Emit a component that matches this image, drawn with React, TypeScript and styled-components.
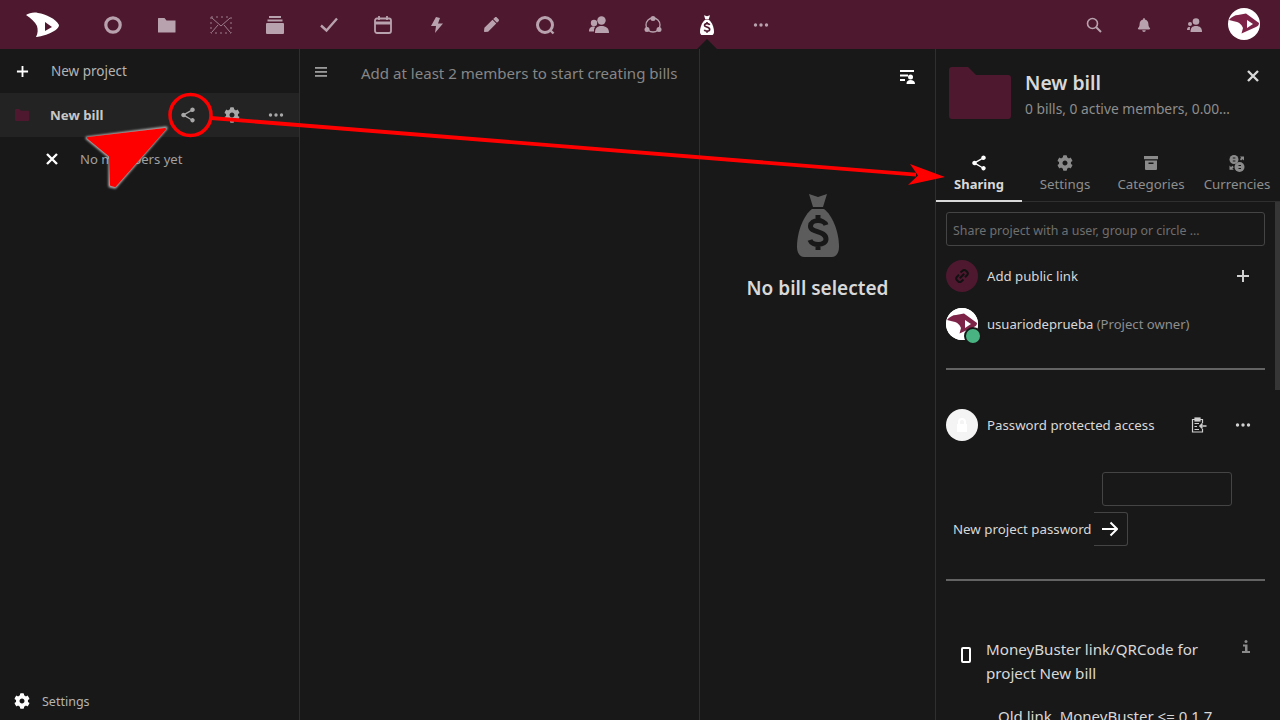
import React from "react";
import styled, { createGlobalStyle } from "styled-components";
import { FaCog, FaBell, FaPen } from "react-icons/fa";
import { MdShare } from "react-icons/md";

const maroon = "#4e182f";
const bg = "#181818";
const iconDim = "#b8a2ad";

const Global = createGlobalStyle`
  html, body { margin: 0; padding: 0; height: 100%; background: ${bg}; overflow: hidden; }
  body { font-family: "Noto Sans", sans-serif; color: #d8d8d8; }
  #root { height: 100%; }
  * { box-sizing: border-box; }
`;

const Page = styled.div`
  position: relative;
  width: 1280px;
  height: 720px;
  overflow: hidden;
  display: flex;
  flex-direction: column;
`;

const TopBar = styled.header`
  height: 49px;
  flex: none;
  display: flex;
  align-items: stretch;
  background: ${maroon};
`;
const LogoBox = styled.div`
  width: 86px;
  display: flex;
  align-items: center;
  justify-content: center;
`;
const AppItem = styled.div<{ $active?: boolean }>`
  position: relative;
  width: 54px;
  display: flex;
  align-items: center;
  justify-content: center;
  color: ${(p) => (p.$active ? "#fff" : iconDim)};
  ${(p) =>
    p.$active &&
    `&::after {
      content: "";
      position: absolute;
      left: 17px;
      bottom: 0;
      border-left: 10px solid transparent;
      border-right: 10px solid transparent;
      border-bottom: 10px solid ${bg};
    }`}
`;
const Spacer = styled.div`
  flex: 1;
`;
const RightItem = styled.div`
  width: 50px;
  display: flex;
  align-items: center;
  justify-content: center;
  color: ${iconDim};
`;
const AvatarSlot = styled.div`
  width: 61px;
  display: flex;
  align-items: center;
  padding: 0 20px 1px 0;
  justify-content: flex-end;
`;

const Main = styled.div`
  flex: 1;
  display: flex;
  min-height: 0;
`;

const Nav = styled.nav`
  width: 300px;
  flex: none;
  border-right: 1px solid #2f2f2f;
  display: flex;
  flex-direction: column;
`;
const NavRow = styled.div<{ $current?: boolean }>`
  height: 44px;
  display: flex;
  align-items: center;
  padding-right: ${(p) => (p.$current ? "1px" : "0")};
  background: ${(p) => (p.$current ? "#232323" : "transparent")};
  font-size: 13.5px;
  color: #b4b4b4;
`;
const NavIconCell = styled.div`
  width: 44px;
  height: 44px;
  flex: none;
  display: flex;
  align-items: center;
  justify-content: center;
  color: #fff;
`;
const NavLabel = styled.span`
  margin-left: 7px;
`;
const NavTitle = styled.span`
  margin-left: 6px;
  flex: 1;
  font-size: 13.25px;
  font-weight: 700;
  color: #c8c8c8;
`;
const NavAction = styled.div`
  width: 44px;
  height: 44px;
  display: flex;
  align-items: center;
  justify-content: center;
  color: #a8a8a8;
`;
const NavSubRow = styled.div`
  height: 44px;
  display: flex;
  align-items: center;
  padding-left: 30px;
  font-size: 13.1px;
  color: #a0a0a0;
`;
const NavSubLabel = styled.span`
  margin-left: 6px;
`;
const NavFooter = styled.div`
  margin-top: auto;
  height: 38px;
  padding-left: 14px;
  display: flex;
  align-items: center;
  font-size: 12.5px;
  color: #b4b4b4;
`;
const FooterLabel = styled.span`
  margin-left: 12px;
`;

const ListCol = styled.section`
  width: 400px;
  flex: none;
  border-right: 1px solid #2f2f2f;
  display: flex;
  align-items: flex-start;
  padding: 14px 0 0 15px;
`;
const ListHint = styled.div`
  margin-left: 33px;
  font-size: 15.05px;
  line-height: 20px;
  color: #868686;
`;

const DetailCol = styled.section`
  width: 235px;
  flex: none;
  display: flex;
  flex-direction: column;
  align-items: center;
`;
const DetailTool = styled.div`
  align-self: flex-end;
  margin: 21px 19px 0 0;
  height: 16px;
  display: flex;
`;
const EmptyBag = styled.div`
  margin-top: 107px;
  display: flex;
`;
const EmptyTitle = styled.h2`
  margin: 16px 0 0;
  font-size: 19px;
  line-height: 30px;
  font-weight: 600;
  color: #d8d8d8;
  white-space: nowrap;
`;

const Aside = styled.aside`
  width: 345px;
  flex: none;
  border-left: 1px solid #2f2f2f;
  display: flex;
  flex-direction: column;
  overflow: hidden;
`;
const AsideHead = styled.div`
  height: 103px;
  flex: none;
  display: flex;
  align-items: flex-start;
  padding: 18px 0 0 13px;
`;
const HeadText = styled.div`
  margin-left: 14px;
  width: 208px;
`;
const HeadTitle = styled.div`
  font-size: 19.4px;
  font-weight: 600;
  line-height: 28px;
  margin-top: 2px;
  color: #d8d8d8;
`;
const HeadSub = styled.div`
  margin-top: 1px;
  font-size: 13.8px;
  line-height: 22px;
  color: #8e8e8e;
  white-space: nowrap;
  overflow: hidden;
  text-overflow: ellipsis;
`;
const CloseBtn = styled.div`
  margin: 2px 0 0 13px;
  color: #d8d8d8;
  display: flex;
`;

const Tabs = styled.div`
  height: 50px;
  flex: none;
  display: flex;
  border-bottom: 1px solid #2f2f2f;
`;
const Tab = styled.div<{ $active?: boolean }>`
  width: 86px;
  height: 50px;
  padding-top: 3px;
  display: flex;
  flex-direction: column;
  align-items: center;
  font-size: ${(p) => (p.$active ? "13px" : "13.3px")};
  line-height: 20px;
  white-space: nowrap;
  font-weight: ${(p) => (p.$active ? 700 : 400)};
  color: ${(p) => (p.$active ? "#d8d8d8" : "#8e8e8e")};
  border-bottom: 2px solid ${(p) => (p.$active ? "#d8d8d8" : "transparent")};
`;
const TabIcon = styled.div<{ $active?: boolean }>`
  height: 16px;
  margin-bottom: 3px;
  display: flex;
  align-items: center;
  justify-content: center;
  color: ${(p) => (p.$active ? "#fff" : "#8a8a8a")};
`;

const PanelWrap = styled.div`
  flex: 1;
  display: flex;
  min-height: 0;
`;
const Panel = styled.div`
  width: 339px;
  flex: none;
  padding: 10px 10px 0;
  font-size: 14px;
  color: #d8d8d8;
`;
const Thumb = styled.div`
  width: 5px;
  height: 188px;
  background: #363636;
`;
const ShareInput = styled.div`
  height: 34px;
  border: 1px solid #444;
  border-radius: 3px;
  padding: 2px 0 0 6px;
  display: flex;
  align-items: center;
  font-size: 12.4px;
  color: #6f6f6f;
  white-space: nowrap;
  margin-bottom: 6px;
`;
const ShareRow = styled.div`
  height: 48px;
  display: flex;
  align-items: center;
`;
const Circle = styled.div<{ $tone: string }>`
  position: relative;
  width: 32px;
  height: 32px;
  flex: none;
  border-radius: 50%;
  background: ${(p) => p.$tone};
  display: flex;
  align-items: center;
  justify-content: center;
`;
const Online = styled.span`
  position: absolute;
  right: -4px;
  bottom: -5px;
  width: 18px;
  height: 18px;
  border-radius: 50%;
  background: #49b382;
  border: 2px solid ${bg};
`;
const RowText = styled.div<{ $size?: number }>`
  margin-left: 9px;
  flex: 1;
  white-space: nowrap;
  font-size: ${(p) => p.$size ?? 13.2}px;
`;
const Muted = styled.span`
  color: #8e8e8e;
`;
const RowBtn = styled.div`
  width: 44px;
  height: 44px;
  display: flex;
  align-items: center;
  justify-content: center;
  color: #d0d0d0;
`;
const Rule = styled.hr<{ $top: number }>`
  border: 0;
  height: 2px;
  background: #636363;
  margin: ${(p) => p.$top}px 0 0;
`;
const PwdRow = styled(ShareRow)`
  margin-top: 31px;
`;
const PwdBox = styled.div`
  margin: 23px 0 0 156px;
  width: 130px;
  height: 34px;
  border: 1px solid #444;
  border-radius: 3px;
`;
const PwdForm = styled.div`
  margin-top: 6px;
  padding-left: 7px;
  height: 34px;
  display: flex;
  align-items: center;
`;
const PwdLabel = styled.span`
  font-size: 13.3px;
  white-space: nowrap;
`;
const SubmitBtn = styled.div`
  margin-left: 2px;
  width: 34px;
  height: 34px;
  border: 1px solid #444;
  border-left: 0;
  border-radius: 0 3px 3px 0;
  display: flex;
  align-items: center;
  justify-content: center;
  color: #fff;
`;
const MoneyRow = styled.div`
  margin-top: 56px;
  display: flex;
  align-items: flex-start;
`;
const MoneyIcon = styled.div`
  width: 40px;
  padding: 10px 0 0 15px;
  flex: none;
  display: flex;
`;
const MoneyText = styled.div`
  width: 244px;
  font-size: 15.15px;
  line-height: 24px;
`;
const MoneyInfo = styled.div`
  margin: 3px 0 0 12px;
  display: flex;
`;
const OldLink = styled.div`
  margin: 19px 0 0 52px;
  font-size: 15px;
  line-height: 24px;
  white-space: nowrap;
`;

const Overlay = styled.svg`
  position: absolute;
  left: 0;
  top: 0;
  width: 1280px;
  height: 720px;
  pointer-events: none;
`;

const Dots = ({ c = "currentColor" }: { c?: string }) => (
  <svg width="16" height="16" viewBox="0 0 16 16" fill={c}>
    <circle cx="2.5" cy="8" r="1.7" />
    <circle cx="8" cy="8" r="1.7" />
    <circle cx="13.5" cy="8" r="1.7" />
  </svg>
);
const Plus = ({ s = 14, w = 2 }: { s?: number; w?: number }) => (
  <svg width={s} height={s} viewBox="0 0 14 14" stroke="currentColor" strokeWidth={w} fill="none">
    <path d="M7 1V13M1 7H13" />
  </svg>
);
const Cross = ({ s = 14, w = 2.4 }: { s?: number; w?: number }) => (
  <svg width={s} height={s} viewBox="0 0 14 14" stroke="currentColor" strokeWidth={w} fill="none">
    <path d="M2 2L12 12M12 2L2 12" />
  </svg>
);
const Folder = ({ w, h }: { w: number; h: number }) => (
  <svg width={w} height={h} viewBox="0 0 62 52" fill={maroon} preserveAspectRatio="none">
    <path d="M3 0H19L27 8H59a3 3 0 0 1 3 3V49a3 3 0 0 1-3 3H3a3 3 0 0 1-3-3V3a3 3 0 0 1 3-3Z" />
  </svg>
);
const Bag = ({ w, h, body, mark }: { w: number; h: number; body: string; mark: string }) => (
  <svg width={w} height={h} viewBox="0 0 42 64" preserveAspectRatio="none">
    <path fill={body} d="M12 1L21 4L30 1L26 14H16Z" />
    <path fill={body} d="M15 16H27C35 22 42 38 42 54C42 60 39 64 35 64H7C3 64 0 60 0 54C0 38 7 22 15 16Z" />
    <path
      fill="none"
      stroke={mark}
      strokeWidth="5"
      d="M29 32C27 26 14 26 13.500 33C13 40 29 37 29 46C29 53 15 53 13 47M21 22V27M21 52V57"
    />
  </svg>
);
const DLogo = () => (
  <svg width="34" height="26" viewBox="0 0 34 26">
    <path
      fillRule="evenodd"
      fill="#fff"
      d="M0 3C3 1 8 0 12 1C20 2 30 7 33 13C33 17 27 20 22 22C17 24 12 25 10 25C12 21 12 18 11 14C9 10 5 6 0 3ZM19 10V19L26 15Z"
    />
  </svg>
);
const UserAvatar = ({ s }: { s: number }) => (
  <svg width={s} height={s} viewBox="0 0 32 32">
    <circle cx="16" cy="16" r="16" fill="#fff" />
    <path
      fillRule="evenodd"
      fill="#7c2347"
      d="M1 12C3 9 7 7 10 7L18 5.500L31 15C31 17 30 18 28 19L13.500 25.500L15 20C14 17 11 14 8 13.700L1 12ZM19 12L19 20L25 16Z"
    />
  </svg>
);

const apps: React.ReactNode[] = [
  <svg key="a" width="18" height="18" viewBox="0 0 18 18" fill="none" stroke="currentColor" strokeWidth="3.200">
    <circle cx="9" cy="9" r="7.200" />
  </svg>,
  <svg key="b" width="18" height="16" viewBox="0 0 18 16" fill="currentColor">
    <path d="M.5 1h6l2 2.500h9v11.500a.5.5 0 0 1-.5.500H.5a.5.5 0 0 1-.5-.5V1.500a.5.5 0 0 1 .5-.5Z" />
  </svg>,
  <svg key="c" width="22" height="18" viewBox="0 0 22 18" fill="none" stroke="currentColor" strokeWidth="1" opacity="0.75">
    <rect x="1" y="1" width="20" height="16" strokeDasharray="2 3" />
    <path d="M2 2L11 10L20 2M2 16L8 9M20 16L14 9" />
  </svg>,
  <svg key="d" width="18" height="18" viewBox="0 0 18 18" fill="currentColor">
    <rect x="3" y="0" width="12" height="2" />
    <rect x="1.500" y="3.500" width="15" height="2" />
    <path d="M1 7H17a1 1 0 0 1 1 1V17a1 1 0 0 1-1 1H1a1 1 0 0 1-1-1V8a1 1 0 0 1 1-1Z" />
  </svg>,
  <svg key="e" width="18" height="16" viewBox="0 0 18 16" fill="none" stroke="currentColor" strokeWidth="2.400">
    <path d="M1 8.500L6.500 13.500L17 1.500" />
  </svg>,
  <svg key="f" width="18" height="18" viewBox="0 0 18 18" fill="none" stroke="currentColor" strokeWidth="1.800">
    <rect x="1" y="2.500" width="16" height="14.500" rx="2" />
    <path d="M1 7H17" strokeWidth="3" />
    <path d="M5 0V4M13 0V4" />
  </svg>,
  <svg key="g" width="12" height="16" viewBox="0 0 12 16" fill="currentColor">
    <path d="M5 0L0 9H5L4 16L12 6.500H7L9 1Z" />
  </svg>,
  <FaPen key="h" size={15} />,
  <svg key="i" width="20" height="20" viewBox="0 0 20 20" fill="none" stroke="currentColor" strokeWidth="3">
    <circle cx="10" cy="10" r="7.500" />
    <path d="M15 15L18.500 18.500" strokeWidth="2.400" />
  </svg>,
  <svg key="j" width="20" height="18" viewBox="0 0 20 18" fill="currentColor">
    <circle cx="12.500" cy="4.500" r="4.200" />
    <path d="M6 17C6 12 8 10 12.500 10C17 10 20 12 20 17Z" />
    <circle cx="5" cy="7" r="3.200" />
    <path d="M0 15.500C0 12 1.500 10.500 5 10.500C6 10.500 6.500 11 5 13V15.500Z" />
  </svg>,
  <svg key="k" width="18" height="18" viewBox="0 0 18 18" fill="none" stroke="currentColor" strokeWidth="1.300">
    <circle cx="9" cy="9" r="7" />
    <g fill="currentColor" stroke="none">
      <circle cx="9" cy="2.500" r="2.500" />
      <circle cx="3" cy="13.500" r="2.500" />
      <circle cx="15" cy="13.500" r="2.500" />
    </g>
  </svg>,
];

const CurrencyIcon = () => (
  <svg width="16" height="17" viewBox="0 0 16 17" fill="currentColor">
    <circle cx="5" cy="4.500" r="4.500" />
    <circle cx="10.500" cy="12" r="5" />
    <path d="M11 1.500H15V5.500L13.600 4.200L12 5.500L10.800 4L12.200 2.900ZM0.500 10.500L2 12L3.500 10.800L4.800 12.300L3.400 13.400L4.800 14.700H0.500Z" />
    <path d="M3.800 3h2.600M3.800 6h2.600M9.500 10.500h2.500M9.500 13.500h2.500" stroke={bg} strokeWidth="1" />
  </svg>
);
const ArchiveIcon = () => (
  <svg width="14" height="14" viewBox="0 0 14 14" fill="currentColor">
    <rect x="0" y="0" width="14" height="3.200" />
    <path d="M1 4.500H13V13a1 1 0 0 1-1 1H2a1 1 0 0 1-1-1ZM4.500 6.500V8H9.500V6.500Z" fillRule="evenodd" />
  </svg>
);

export default function App() {
  return (
    <Page>
      <Global />
      <TopBar>
        <LogoBox>
          <DLogo />
        </LogoBox>
        {apps.map((icon, i) => (
          <AppItem key={i}>{icon}</AppItem>
        ))}
        <AppItem $active>
          <Bag w={14} h={20} body="#fff" mark={maroon} />
        </AppItem>
        <AppItem>
          <Dots />
        </AppItem>
        <Spacer />
        <RightItem>
          <svg width="16" height="16" viewBox="0 0 16 16" fill="none" stroke="currentColor" strokeWidth="1.600">
            <circle cx="6.500" cy="6.500" r="5" />
            <path d="M10 10L15 15" strokeWidth="2" />
          </svg>
        </RightItem>
        <RightItem>
          <FaBell size={14} />
        </RightItem>
        <RightItem>
          <svg width="15" height="14" viewBox="0 0 15 14" fill="currentColor">
            <circle cx="9" cy="3.500" r="3.300" />
            <path d="M3.500 14C3.500 10 5 8 9 8C13 8 15 10 15 14Z" />
            <circle cx="3" cy="6" r="2" />
            <path d="M0 12C0 9.500 1 9 3 9L2.800 12Z" />
          </svg>
        </RightItem>
        <AvatarSlot>
          <UserAvatar s={32} />
        </AvatarSlot>
      </TopBar>
      <Main>
        <Nav>
          <NavRow>
            <NavIconCell>
              <Plus s={13} />
            </NavIconCell>
            <NavLabel>New project</NavLabel>
          </NavRow>
          <NavRow $current>
            <NavIconCell>
              <Folder w={14} h={12} />
            </NavIconCell>
            <NavTitle>New bill</NavTitle>
            <NavAction>
              <MdShare size={18} />
            </NavAction>
            <NavAction>
              <FaCog size={16} />
            </NavAction>
            <NavAction>
              <Dots />
            </NavAction>
          </NavRow>
          <NavSubRow>
            <NavIconCell>
              <Cross s={14} />
            </NavIconCell>
            <NavSubLabel>No members yet</NavSubLabel>
          </NavSubRow>
          <NavFooter>
            <FaCog size={16} color="#fff" />
            <FooterLabel>Settings</FooterLabel>
          </NavFooter>
        </Nav>
        <ListCol>
          <svg width="13" height="16" viewBox="0 0 13 16" fill="#9a9a9a">
            <rect y="4" width="12" height="1.800" />
            <rect y="8" width="12" height="1.800" />
            <rect y="12" width="12" height="1.800" />
          </svg>
          <ListHint>Add at least 2 members to start creating bills</ListHint>
        </ListCol>
        <DetailCol>
          <DetailTool>
            <svg width="16" height="15" viewBox="0 0 16 15" fill="#fff">
              <rect x="0" y="0" width="14" height="2" />
              <rect x="0" y="4.500" width="8" height="2" />
              <rect x="0" y="9" width="5" height="2" />
              <circle cx="10.500" cy="7" r="2.500" />
              <path d="M6.500 14C6.500 11 8 10 10.500 10C13 10 15 11 15 14Z" />
            </svg>
          </DetailTool>
          <EmptyBag>
            <Bag w={42} h={64} body="#5c5c5c" mark={bg} />
          </EmptyBag>
          <EmptyTitle>No bill selected</EmptyTitle>
        </DetailCol>
        <Aside>
          <AsideHead>
            <Folder w={62} h={52} />
            <HeadText>
              <HeadTitle>New bill</HeadTitle>
              <HeadSub>0 bills, 0 active members, 0.00 spent</HeadSub>
            </HeadText>
            <CloseBtn>
              <Cross s={14} />
            </CloseBtn>
          </AsideHead>
          <Tabs>
            <Tab $active>
              <TabIcon $active>
                <MdShare size={18} />
              </TabIcon>
              Sharing
            </Tab>
            <Tab>
              <TabIcon>
                <FaCog size={16} />
              </TabIcon>
              Settings
            </Tab>
            <Tab>
              <TabIcon>
                <ArchiveIcon />
              </TabIcon>
              Categories
            </Tab>
            <Tab>
              <TabIcon>
                <CurrencyIcon />
              </TabIcon>
              Currencies
            </Tab>
          </Tabs>
          <PanelWrap>
            <Panel>
              <ShareInput>Share project with a user, group or circle …</ShareInput>
              <ShareRow>
                <Circle $tone={maroon}>
                  <svg width="16" height="16" viewBox="0 0 16 16" fill="none" stroke="#111" strokeWidth="2">
                    <path d="M6.500 4.500L8.500 2.800a2.500 2.500 0 0 1 3.500 0l1 1a2.500 2.500 0 0 1 0 3.500L11 9.200M9.500 11.500L7.500 13.200a2.500 2.500 0 0 1-3.500 0l-1-1a2.500 2.500 0 0 1 0-3.500L5 6.800M5.800 10.200L10.200 5.800" />
                  </svg>
                </Circle>
                <RowText>Add public link</RowText>
                <RowBtn>
                  <Plus s={14} />
                </RowBtn>
              </ShareRow>
              <ShareRow>
                <Circle $tone="#fff">
                  <UserAvatar s={32} />
                  <Online />
                </Circle>
                <RowText $size={13.1}>
                  usuariodeprueba <Muted>(Project owner)</Muted>
                </RowText>
              </ShareRow>
              <Rule $top={20} />
              <PwdRow>
                <Circle $tone="#f4f4f4">
                  <svg width="14" height="16" viewBox="0 0 14 16" fill="#fff">
                    <path d="M2 7H12V15H2Z" />
                    <path d="M4 7V5a3 3 0 0 1 6 0V7" fill="none" stroke="#fff" strokeWidth="2" />
                  </svg>
                </Circle>
                <RowText $size={13.25}>Password protected access</RowText>
                <RowBtn>
                  <svg width="16" height="16" viewBox="0 0 16 16" fill="none" stroke="#cfcfcf" strokeWidth="1.200">
                    <path d="M11.500 6V2.500H1.500V15H11.500V12" />
                    <rect x="4" y="1" width="5" height="3" fill="#cfcfcf" />
                    <path d="M3.500 6.500H8M3.500 9.500H6M3.500 12.500H8" />
                    <path d="M15.500 9H9M11.500 6.500L9 9L11.500 11.500" strokeWidth="1.600" />
                  </svg>
                </RowBtn>
                <RowBtn>
                  <Dots />
                </RowBtn>
              </PwdRow>
              <PwdBox />
              <PwdForm>
                <PwdLabel>New project password</PwdLabel>
                <SubmitBtn>
                  <svg width="16" height="16" viewBox="0 0 16 16" fill="none" stroke="currentColor" strokeWidth="2">
                    <path d="M0 8H15M8.500 1.500L15 8L8.500 14.500" />
                  </svg>
                </SubmitBtn>
              </PwdForm>
              <Rule $top={33} />
              <MoneyRow>
                <MoneyIcon>
                  <svg width="10" height="16" viewBox="0 0 10 16" fill="none" stroke="#fff" strokeWidth="2">
                    <rect x="1" y="1" width="8" height="14" rx="1" />
                  </svg>
                </MoneyIcon>
                <MoneyText>MoneyBuster link/QRCode for project New bill</MoneyText>
                <MoneyInfo>
                  <svg width="8" height="13" viewBox="0 0 8 13" fill="#8a8a8a">
                    <circle cx="4" cy="1.500" r="1.500" />
                    <path d="M1 4.500H5.500V11H8V13H0V11H3V6.500H1Z" />
                  </svg>
                </MoneyInfo>
              </MoneyRow>
              <OldLink>Old link, MoneyBuster &lt;= 0.1.7</OldLink>
            </Panel>
            <Thumb />
          </PanelWrap>
        </Aside>
      </Main>
      <Overlay viewBox="0 0 1280 720">
        <defs>
          <filter id="glow" x="-20%" y="-20%" width="140%" height="140%">
            <feGaussianBlur stdDeviation="1.200" />
          </filter>
        </defs>
        <path
          d="M166 128L87 138L110 157L110 186L115 187Z"
          fill="#b8b8b8"
          stroke="#b8b8b8"
          strokeWidth="3"
          strokeLinejoin="round"
          filter="url(#glow)"
        />
        <path d="M165 129L88 138L110 156L111 185L115 186Z" fill="#f00" stroke="#f00" strokeWidth="2" strokeLinejoin="round" />
        <circle cx="190.500" cy="115" r="20.500" fill="none" stroke="#f00" strokeWidth="3.500" />
        <path d="M211 116L916 172.800L916 176.600L211 120Z" fill="#f00" />
        <path d="M945 177L910 164L918 175.500L908 185Z" fill="#f00" />
      </Overlay>
    </Page>
  );
}
